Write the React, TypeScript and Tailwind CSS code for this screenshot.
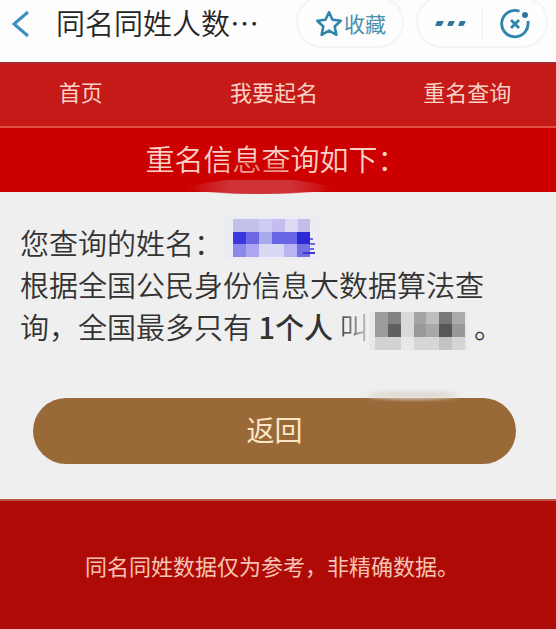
import React from 'react';

type Cell = [number, number, number, number, string];

const nameCells: Cell[] = [
  [0, 0, 98, 44, '#ececf3'],
  [10, 3, 26, 13, '#c3c1ec'], [36, 3, 13, 13, '#cdcbf1'], [49, 3, 13, 13, '#c3bdf0'], [62, 3, 13, 13, '#dcdaf2'], [75, 3, 12, 13, '#c5bdea'],
  [10, 16, 13, 12, '#3c36df'], [23, 16, 13, 12, '#6d68e4'], [36, 16, 13, 12, '#aaa8ef'], [49, 16, 25, 12, '#6966e6'], [74, 16, 13, 12, '#2b28d4'],
  [10, 28, 13, 13, '#8a88ed'], [23, 28, 13, 13, '#aaa6ef'], [36, 28, 25, 13, '#dad9f3'], [61, 28, 13, 13, '#b7b5f2'], [74, 28, 13, 13, '#7370e4'],
  [87, 22, 3, 2, '#6c69dc'], [87, 27, 5, 2, '#6c69dc'], [87, 32, 4, 2, '#6c69dc'], [80, 36, 12, 2, '#3d39cf'],
];

const personCells: Cell[] = [
  [0, 0, 98, 38, '#e8e8e8'],
  [6, 0, 13, 25, '#9b9b9b'], [19, 0, 13, 12, '#828282'], [19, 12, 13, 13, '#5f5f5f'], [32, 0, 13, 25, '#d9d9d9'],
  [45, 0, 12, 12, '#a4a4a4'], [45, 12, 12, 13, '#999999'], [57, 0, 13, 12, '#bebebe'], [57, 12, 13, 13, '#a8a8a8'],
  [70, 0, 13, 12, '#777777'], [70, 12, 13, 13, '#575757'], [83, 0, 13, 12, '#aaaaaa'], [83, 12, 13, 13, '#989898'],
  [6, 25, 26, 13, '#d2d2d2'], [45, 25, 25, 13, '#d6d6d6'], [70, 25, 13, 13, '#c3c3c3'], [83, 25, 13, 13, '#d4d4d4'],
];

function Mosaic({ cells, width, height, label }: { cells: Cell[]; width: number; height: number; label: string }) {
  return (
    <svg className="inline-block align-middle" width={width} height={height} role="img" aria-label={label} shapeRendering="crispEdges">
      {cells.map(([x, y, w, h, fill], i) => (
        <rect key={i} x={x} y={y} width={w} height={h} fill={fill} />
      ))}
    </svg>
  );
}

export default function App() {
  return (
    <div className="bg-[#efeff0] font-['Noto_Sans_CJK_SC',sans-serif] text-[#333333]" lang="zh-CN">
      <header className="flex h-[62px] items-start bg-[#fdfdfd] pr-2 pl-3">
        <button type="button" aria-label="后退" className="mt-2 h-8 w-11 shrink-0">
          <svg width="20" height="30" viewBox="0 0 20 30" fill="none" stroke="#3a8fc0" strokeWidth="3">
            <path d="M16 3 2 15l14 12" />
          </svg>
        </button>
        <h1 className="mt-[2px] min-w-0 flex-1 whitespace-nowrap text-[29px] leading-10 font-[350] text-[#252525]">同名同姓人数<span>⋯</span></h1>
        <button type="button" className="-mt-1 flex h-[52px] w-[108px] shrink-0 items-center justify-center rounded-full border-2 border-[#f4f4f5] pt-1 text-[21px] text-[#4a8fab]">
          <svg width="30" height="30" viewBox="0 0 28 28" fill="none" stroke="#2f84aa" strokeWidth="2.4" strokeLinejoin="round">
            <path d="m14 3 3.3 7.1 7.7.9-5.7 5.3 1.6 7.8-6.9-3.9-6.9 3.9 1.6-7.8L3 11l7.7-.9Z" />
          </svg>
          收藏
        </button>
        <div className="-mt-1 ml-3 flex h-[52px] w-[132px] shrink-0 items-center rounded-full border-2 border-[#f4f4f5] pt-1">
          <button type="button" aria-label="更多" className="flex h-7 flex-1 items-center justify-center border-r-2 border-[#f4f4f5]">
            <svg width="32" height="8" viewBox="0 0 32 8" fill="#2f769b">
              <path d="M3 1h6q1 0 .5 1L8 5q-.5 1-1.500 1H2q-1 0-.5-1L2.500 2Q3 1 4 1zM15 1h5q1 0 .5 1L19 5q-.5 1-1.500 1H14q-1 0-.5-1l1-3q.5-1 1.500-1zM26 1h5q1 0 .5 1L30 5q-.5 1-1.500 1H25q-1 0-.5-1l1-3q.5-1 1.500-1z" />
            </svg>
          </button>
          <button type="button" aria-label="关闭" className="flex flex-1 items-center justify-center">
            <svg width="32" height="32" viewBox="0 0 32 32" fill="none" stroke="#2f84aa" strokeWidth="2.8">
              <path d="M20.5 3.3A13.2 13.2 0 1 0 28.8 13M12 12l8 8M20 12l-8 8" />
              <circle cx="26" cy="7" r="3" fill="#2f769b" stroke="none" />
            </svg>
          </button>
        </div>
      </header>

      <nav className="h-[66px] overflow-hidden border-t-2 border-b-2 border-t-[#a9282b] border-b-[#e0503f] bg-[#c51a17] pb-2 text-[22px] text-[#f9d3c8]">
        <ul className="-mr-2 -ml-4 grid h-full grid-cols-3 items-center text-center">
          <li><a href="#home">首页</a></li>
          <li><a href="#naming">我要起名</a></li>
          <li><a href="#query">重名查询</a></li>
        </ul>
      </nav>

      <h2 className="relative h-16 bg-[#cc0000] pr-1 text-center text-[29px] leading-[60px] font-[350] text-[#fbd0c6]">
        重名信息查询如下：
        <svg className="absolute bottom-[-4px] left-[180px]" width="160" height="42" viewBox="0 0 160 42" aria-hidden="true">
          <defs>
            <linearGradient id="smudge" x1="0" x2="1" y1="0" y2="0">
              <stop offset="0" stopColor="#cf3237" stopOpacity="0" />
              <stop offset=".3" stopColor="#cf3237" />
              <stop offset=".7" stopColor="#cf3237" />
              <stop offset="1" stopColor="#cf3237" stopOpacity="0" />
            </linearGradient>
            <filter id="soften" x="-30%" y="-60%" width="160%" height="220%"><feGaussianBlur stdDeviation="3" /></filter>
          </defs>
          <ellipse cx="80" cy="14" rx="34" ry="6" fill="#cc0000" fillOpacity=".4" filter="url(#soften)" />
          <path d="M5 36Q20 28 50 26h60q30 2 45 10-35 4-75 4T5 36Z" fill="url(#smudge)" />
        </svg>
      </h2>

      <main className="px-5 pt-[29px] pb-[35px]">
        <div className="text-[29px] leading-[42px] font-[350]">
          <p className="flex h-[42px] items-center">
            您查询的姓名：
            <span className="-mt-2 flex"><Mosaic cells={nameCells} width={98} height={44} label="姓名" /></span>
          </p>
          <p>
            根据全国公民身份信息大数据算法查询，全国最多只有 <strong className="font-medium">1个人</strong> <span className="bg-linear-to-r from-[#444444] to-[#c4c4c4] bg-clip-text text-transparent">叫</span>
            <span className="ml-px"><Mosaic cells={personCells} width={98} height={38} label="姓名" /></span> 。
          </p>
        </div>
        <div className="relative mr-5 ml-[13px] mt-12">
          <button type="button" className="block h-[66px] w-full rounded-full bg-[#996938] pb-1 text-[28px] text-[#fbe7c5]">返回</button>
          <svg className="pointer-events-none absolute -top-3 right-12" width="110" height="16" viewBox="0 0 110 16" aria-hidden="true">
            <filter id="haze" x="-10%" y="-40%" width="120%" height="180%"><feGaussianBlur stdDeviation="2" /></filter>
            <ellipse cx="55" cy="9" rx="46" ry="4" fill="#dfdad2" filter="url(#haze)" />
          </svg>
        </div>
      </main>

      <footer className="h-[131px] border-t-2 border-[#b95443] bg-[#af0b06] pr-3 text-center text-[22px] leading-[128px] text-[#f6c4b5]">
        同名同姓数据仅为参考，非精确数据。
      </footer>
    </div>
  );
}
